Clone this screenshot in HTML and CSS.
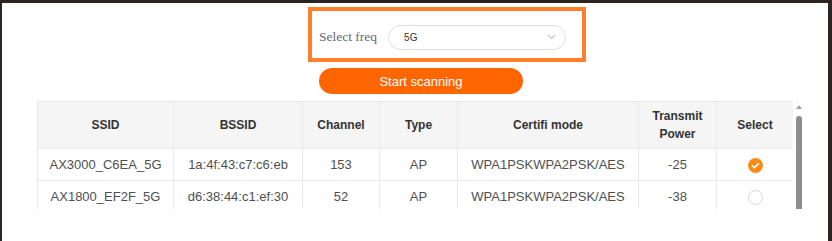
FILE: index.html
```html
<!DOCTYPE html>
<html lang="en">
  <head>
    <meta charset="UTF-8" />
    <meta name="viewport" content="width=device-width, initial-scale=1.0" />
    <title>Scan</title>
    <link rel="stylesheet" href="styles.css">
  </head>
  <body>
    <main class="window">
      <div class="freq-box">
        <span class="freq-label">Select freq</span>
        <div class="freq-select">
          <span class="freq-select__value">5G</span>
          <svg class="freq-select__arrow" width="9" height="6" viewBox="0 0 9 6">
            <path d="M1 1l3.5 3.5L8 1" fill="none" stroke="#c0c4cc" stroke-width="1.1" />
          </svg>
        </div>
      </div>

      <button class="btn-scan">Start scanning</button>

      <div class="scan-list">
        <div class="scan-list__body">
          <table class="scan-table">
            <colgroup>
              <col style="width: 136px" />
              <col style="width: 129px" />
              <col style="width: 77px" />
              <col style="width: 78px" />
              <col style="width: 181px" />
              <col style="width: 78px" />
              <col style="width: 77px" />
            </colgroup>
            <thead>
              <tr>
                <th>SSID</th>
                <th>BSSID</th>
                <th>Channel</th>
                <th>Type</th>
                <th>Certifi mode</th>
                <th>Transmit<br />Power</th>
                <th>Select</th>
              </tr>
            </thead>
            <tbody>
              <tr>
                <td>AX3000_C6EA_5G</td>
                <td>1a:4f:43:c7:c6:eb</td>
                <td>153</td>
                <td>AP</td>
                <td>WPA1PSKWPA2PSK/AES</td>
                <td>-25</td>
                <td>
                  <span class="radio radio--checked">
                    <svg width="9" height="7" viewBox="0 0 9 7">
                      <path d="M1 3.4l2.4 2.3L8 1.2" fill="none" stroke="#fff" stroke-width="1.6" />
                    </svg>
                  </span>
                </td>
              </tr>
              <tr>
                <td>AX1800_EF2F_5G</td>
                <td>d6:38:44:c1:ef:30</td>
                <td>52</td>
                <td>AP</td>
                <td>WPA1PSKWPA2PSK/AES</td>
                <td>-38</td>
                <td><span class="radio"></span></td>
              </tr>
            </tbody>
          </table>
        </div>
        <div class="scrollbar">
          <span class="scrollbar__arrow"></span>
          <span class="scrollbar__thumb"></span>
        </div>
      </div>
    </main>
  </body>
</html>
```

FILE: styles.css
```css
* {
  margin: 0;
  padding: 0;
  box-sizing: border-box;
}

body {
  font-family: 'Liberation Sans', Arial, sans-serif;
  background-color: #fff;
  color: #555;
}

.window {
  position: relative;
  height: 241px;
  border-top: 3px solid #2b2421;
  border-left: 2px solid #2b2421;
  border-right: 4px solid #2b2421;
  overflow: hidden;
}

/* little white notch on the top edge */
.window::before {
  content: '';
  position: absolute;
  top: -3px;
  left: 412px;
  width: 4px;
  height: 3px;
  background-color: #fff;
}

/* ---------- freq selector ---------- */
.freq-box {
  display: flex;
  align-items: center;
  width: 278px;
  height: 55px;
  margin: 4px 0 0 306px;
  padding: 5px 0 0 7px;
  border: 4px solid #ff7f2a;
}

.freq-label {
  font-family: 'Liberation Serif', 'Times New Roman', serif;
  font-size: 13.5px;
  color: #666a70;
  margin-right: 11px;
}

.freq-select {
  display: flex;
  align-items: center;
  justify-content: space-between;
  width: 178px;
  height: 25px;
  padding: 0 9px 0 15px;
  border: 1px solid #dcdfe6;
  border-radius: 13px;
}

.freq-select__value {
  font-size: 10px;
  font-weight: 500;
  color: #333;
}

/* ---------- scan button ---------- */
.btn-scan {
  display: block;
  width: 204px;
  height: 26px;
  margin: 6px 0 0 317px;
  border: none;
  border-radius: 13px;
  background-color: #ff6600;
  color: #fff;
  font-family: inherit;
  font-size: 13px;
  cursor: pointer;
}

/* ---------- result table ---------- */
.scan-list {
  display: flex;
  height: 108px;
  margin: 7px 0 0 35px;
}

.scan-list__body {
  width: 756px;
  overflow: hidden;
}

.scan-table {
  width: 756px;
  table-layout: fixed;
  border-collapse: collapse;
  text-align: center;
}

.scan-table th,
.scan-table td {
  border: 1px solid #e9e9e9;
}

.scan-table th {
  height: 47px;
  background-color: #f5f5f5;
  font-size: 12px;
  font-weight: 700;
  line-height: 18px;
  color: #333;
}

.scan-table td {
  height: 32px;
  font-size: 13px;
  color: #4f4f4f;
}

.radio {
  display: inline-flex;
  align-items: center;
  justify-content: center;
  width: 15px;
  height: 15px;
  border: 1px solid #d6d6d6;
  border-radius: 50%;
  vertical-align: middle;
}

.radio--checked {
  border: none;
  background-color: #fa8c16;
}

/* ---------- scrollbar ---------- */
.scrollbar {
  display: flex;
  flex-direction: column;
  align-items: center;
  width: 6px;
  margin-left: 3px;
}

.scrollbar__arrow {
  margin-top: 4px;
  border-left: 3px solid transparent;
  border-right: 3px solid transparent;
  border-bottom: 4px solid #a3a3a3;
}

.scrollbar__thumb {
  flex: 1;
  width: 6px;
  margin-top: 7px;
  border-radius: 3px 3px 0 0;
  background-color: #8e8e8e;
}
```
